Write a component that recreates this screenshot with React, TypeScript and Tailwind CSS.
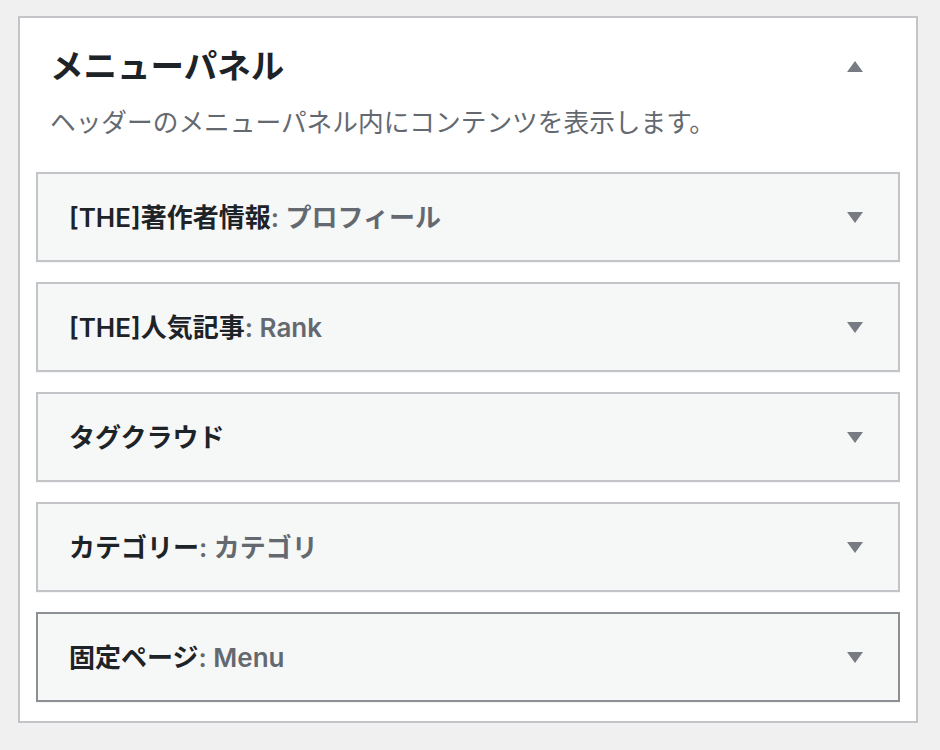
import React from 'react';

type Widget = {
  title: string;
  sub?: string;
  active?: boolean;
};

const widgets: Widget[] = [
  { title: '[THE]著作者情報', sub: ': プロフィール' },
  { title: '[THE]人気記事', sub: ': Rank' },
  { title: 'タグクラウド' },
  { title: 'カテゴリー', sub: ': カテゴリ' },
  { title: '固定ページ', sub: ': Menu', active: true },
];

const Arrow = ({ up }: { up?: boolean }) => (
  <svg width="16" height="11" viewBox="0 0 16 11" className="shrink-0">
    {up ? (
      <polygon points="8,0 16,11 0,11" fill="#787c82" />
    ) : (
      <polygon points="0,0 16,0 8,11" fill="#787c82" />
    )}
  </svg>
);

export default function App() {
  return (
    <div
      className="min-h-[750px] w-[940px] bg-[#f0f0f1] pl-[18px] pt-[16px]"
      style={{ fontFamily: 'Inter, "Noto Sans CJK JP", sans-serif' }}
    >
      <div className="w-[900px] border-2 border-[#c3c4c7] bg-white pb-[19px]">
        {/* section header */}
        <div className="pl-[30px] pr-[53px] pt-[27px]">
          <div className="flex items-center justify-between">
            <h2 className="text-[33.5px] font-bold leading-[43px] text-[#1d2327]">メニューパネル</h2>
            <Arrow up />
          </div>
          <p className="mt-[17px] text-[25.7px] leading-[36px] text-[#646970]">
            ヘッダーのメニューパネル内にコンテンツを表示します。
          </p>
        </div>

        {/* widgets */}
        <div className="mt-[31px] flex flex-col gap-[20px] px-[16px]">
          {widgets.map((w) => (
            <div
              key={w.title}
              className={`flex h-[90px] items-center justify-between border-2 bg-[#f6f7f7] pl-[31px] pr-[35px] shadow-[0_1px_1px_rgba(0,0,0,0.04)] ${
                w.active ? 'border-[#8c8f94]' : 'border-[#c3c4c7]'
              }`}
            >
              <span className="text-[26px] font-semibold text-[#1d2327]">
                {w.title}
                {w.sub && <span className="text-[#646970]">{w.sub}</span>}
              </span>
              <Arrow />
            </div>
          ))}
        </div>
      </div>
    </div>
  );
}
